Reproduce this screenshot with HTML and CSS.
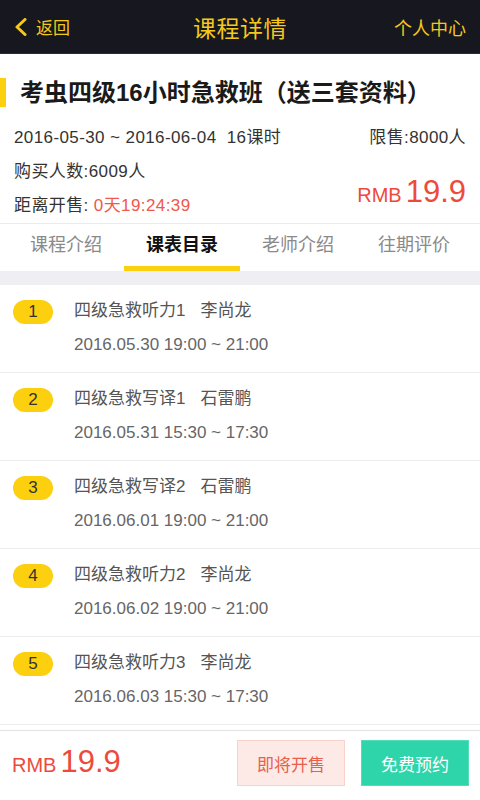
FILE: index.html
```html
<!DOCTYPE html>
<html lang="zh-CN">
<head>
<meta charset="utf-8">
<title>课程详情</title>
<link rel="stylesheet" href="styles.css">
</head>
<body>
<div class="app">
  <header class="topbar">
    <div class="back">
      <svg class="chev" width="14" height="18" viewBox="0 0 14 18"><path d="M11 1.5 L3 9 L11 16.5" fill="none" stroke="#f4c91c" stroke-width="3" stroke-linecap="round" stroke-linejoin="round"/></svg>
      <span>返回</span>
    </div>
    <div class="title">课程详情</div>
    <div class="user">个人中心</div>
  </header>

  <main class="content">
    <section class="course">
      <h1 class="course-title">考虫四级16小时急救班（送三套资料）</h1>
      <div class="info">
        <div class="row">
          <span>2016-05-30 ~ 2016-06-04&nbsp;&nbsp;16课时</span>
          <span>限售:8000人</span>
        </div>
        <div class="row2">
          <div class="left">
            <div class="line">购买人数:6009人</div>
            <div class="line">距离开售: <span class="red">0天19:24:39</span></div>
          </div>
          <div class="price"><span class="cur">RMB</span><span class="num">19.9</span></div>
        </div>
      </div>
    </section>

    <nav class="tabs">
      <div class="tab">课程介绍</div>
      <div class="tab active">课表目录</div>
      <div class="tab">老师介绍</div>
      <div class="tab">往期评价</div>
    </nav>
    <div class="band"></div>

    <ul class="list">
      <li class="item">
        <span class="badge">1</span>
        <div class="texts">
          <div class="name">四级急救听力1<span class="teacher">李尚龙</span></div>
          <div class="date">2016.05.30 19:00 ~ 21:00</div>
        </div>
      </li>
      <li class="item">
        <span class="badge">2</span>
        <div class="texts">
          <div class="name">四级急救写译1<span class="teacher">石雷鹏</span></div>
          <div class="date">2016.05.31 15:30 ~ 17:30</div>
        </div>
      </li>
      <li class="item">
        <span class="badge">3</span>
        <div class="texts">
          <div class="name">四级急救写译2<span class="teacher">石雷鹏</span></div>
          <div class="date">2016.06.01 19:00 ~ 21:00</div>
        </div>
      </li>
      <li class="item">
        <span class="badge">4</span>
        <div class="texts">
          <div class="name">四级急救听力2<span class="teacher">李尚龙</span></div>
          <div class="date">2016.06.02 19:00 ~ 21:00</div>
        </div>
      </li>
      <li class="item">
        <span class="badge">5</span>
        <div class="texts">
          <div class="name">四级急救听力3<span class="teacher">李尚龙</span></div>
          <div class="date">2016.06.03 15:30 ~ 17:30</div>
        </div>
      </li>
    </ul>
  </main>

  <footer class="bottombar">
    <div class="price foot-price"><span class="cur">RMB</span><span class="num">19.9</span></div>
    <div class="buttons">
      <button class="btn soon">即将开售</button>
      <button class="btn reserve">免费预约</button>
    </div>
  </footer>
</div>
</body>
</html>
```

FILE: styles.css
```css
* { box-sizing: border-box; }
html, body { margin: 0; padding: 0; }
body {
  width: 480px;
  height: 800px;
  overflow: hidden;
  background: #fff;
  font-family: "Liberation Sans", "Noto Sans CJK SC", sans-serif;
  color: #333;
}
.app {
  display: flex;
  flex-direction: column;
  height: 800px;
}

/* header */
.topbar {
  height: 54px;
  flex: none;
  background: #17171f;
  display: grid;
  grid-template-columns: 1fr auto 1fr;
  align-items: center;
  padding: 0 14px 0 14px;
  color: #f4c91c;
  border-bottom: 1px solid #2a2a30;
}
.back {
  display: flex;
  align-items: center;
  gap: 8px;
  font-size: 17px;
}
.chev { display: block; }
.title {
  font-size: 23px;
  letter-spacing: 0.5px;
}
.user {
  justify-self: end;
  font-size: 18px;
}

/* content */
.content {
  flex: 1;
  overflow: hidden;
}
.course {
  padding-top: 24px;
}
.course-title {
  margin: 0;
  font-size: 24px;
  line-height: 29px;
  font-weight: 700;
  color: #1a1a1a;
  border-left: 6px solid #fcd00f;
  padding-left: 14px;
}
.info {
  padding: 14px 14px 0 14px;
  font-size: 17px;
  letter-spacing: 0.4px;
  color: #333;
}
.row {
  display: flex;
  justify-content: space-between;
  line-height: 34px;
}
.row2 {
  display: flex;
  justify-content: space-between;
  align-items: flex-end;
}
.line { line-height: 34px; }
.red { color: #f0584a; }
.price {
  color: #ee4a3c;
  display: flex;
  align-items: baseline;
  gap: 4px;
  line-height: 34px;
  margin-bottom: 11px;
  letter-spacing: 0;
}
.cur { font-size: 20px; }
.num { font-size: 31px; }

/* tabs */
.tabs {
  display: grid;
  grid-template-columns: repeat(4, 1fr);
  padding: 0 8px;
  border-top: 1px solid #ececec;
}
.tab {
  text-align: center;
  font-size: 18px;
  color: #8a8a8a;
  line-height: 42px;
  border-bottom: 5px solid transparent;
}
.tab.active {
  color: #111;
  font-weight: 700;
  border-bottom-color: #fcd00f;
}
.band {
  height: 14px;
  background: #efeff3;
}

/* list */
.list {
  list-style: none;
  margin: 0;
  padding: 0;
}
.item {
  display: flex;
  align-items: flex-start;
  padding: 9px 0 10px 13px;
  border-bottom: 1px solid #ededed;
}
.badge {
  flex: none;
  width: 40px;
  height: 24px;
  margin-top: 6px;
  border-radius: 12px;
  background: #fccf0f;
  color: #333;
  font-size: 17px;
  line-height: 24px;
  text-align: center;
}
.texts {
  margin-left: 21px;
  font-size: 17px;
}
.name {
  line-height: 34px;
  color: #555;
}
.teacher { margin-left: 15px; }
.date {
  line-height: 34px;
  color: #666;
}

/* bottom bar */
.bottombar {
  height: 70px;
  flex: none;
  border-top: 1px solid #e3e3e3;
  background: #fff;
  display: flex;
  align-items: center;
  justify-content: space-between;
  padding: 0 11px 5px 12px;
}
.foot-price {
  margin: 0;
  line-height: 40px;
}
.buttons {
  display: flex;
  gap: 16px;
}
.btn {
  width: 108px;
  height: 46px;
  font-family: inherit;
  font-size: 17px;
  padding: 0;
  cursor: pointer;
}
.soon {
  background: #fdeae6;
  border: 1px solid #f8d3cb;
  color: #e8604d;
}
.reserve {
  background: #2fd5aa;
  border: 1px solid #52dcb8;
  color: #fff;
}
```
